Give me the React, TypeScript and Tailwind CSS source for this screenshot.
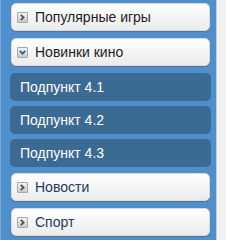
import React from "react";

const font = { fontFamily: '"Liberation Sans", Arial, sans-serif' };

function Icon({ open }: { open?: boolean }) {
  return (
    <span className="flex h-[11px] w-[11px] shrink-0 items-center justify-center rounded-[1px] border border-[#a9a9a9] bg-gradient-to-b from-[#f4f4f4] to-[#c9c9c9]">
      {open ? (
        <svg width="7" height="5" viewBox="0 0 7 5">
          <path d="M0.8 0.8 L3.5 3.6 L6.2 0.8" stroke="#2f5f9a" strokeWidth="1.8" fill="none" />
        </svg>
      ) : (
        <svg width="5" height="7" viewBox="0 0 5 7">
          <path d="M0.8 0.8 L3.6 3.5 L0.8 6.2" stroke="#555" strokeWidth="1.8" fill="none" />
        </svg>
      )}
    </span>
  );
}

function Btn({ label, open, dark, cls }: { label: string; open?: boolean; dark?: boolean; cls: string }) {
  return (
    <div
      className={`mx-[1px] flex h-[28px] items-center gap-[7px] rounded-[5px] border border-[#d6dbe0] bg-gradient-to-b from-white to-[#ebebeb] pl-[5px] text-[14px] shadow-[0_1px_1px_#5b708a] ${cls} ${
        dark ? "text-[#243a60]" : "text-[#1e1e1e]"
      }`}
    >
      <Icon open={open} />
      <span className="leading-none">{label}</span>
    </div>
  );
}

function Sub({ label, cls }: { label: string; cls: string }) {
  return (
    <div className={`flex h-[28px] items-center rounded-[5px] bg-[#3b6a93] pl-[10px] text-[14px] text-white ${cls}`}>
      {label}
    </div>
  );
}

export default function App() {
  return (
    <div className="flex h-[240px] w-[226px] overflow-hidden" style={font}>
      <div className="w-[1px] bg-[#79aad6]" />
      <div className="flex w-[215px] flex-col bg-[#4f8fcb] pl-[9px] pr-[5px] pt-[3px]">
        <Btn label="Популярные игры" cls="" />
        <Btn label="Новинки кино" open cls="mt-[7px]" />
        <Sub label="Подпункт 4.1" cls="mt-[7px]" />
        <Sub label="Подпункт 4.2" cls="mt-[5px]" />
        <Sub label="Подпункт 4.3" cls="mt-[5px]" />
        <Btn label="Новости" dark cls="mt-[6px]" />
        <Btn label="Спорт" dark cls="mt-[7px]" />
      </div>
      <div className="w-[1px] bg-[#c9ced3]" />
      <div className="flex-1 bg-[#f1f1f1]" />
    </div>
  );
}
